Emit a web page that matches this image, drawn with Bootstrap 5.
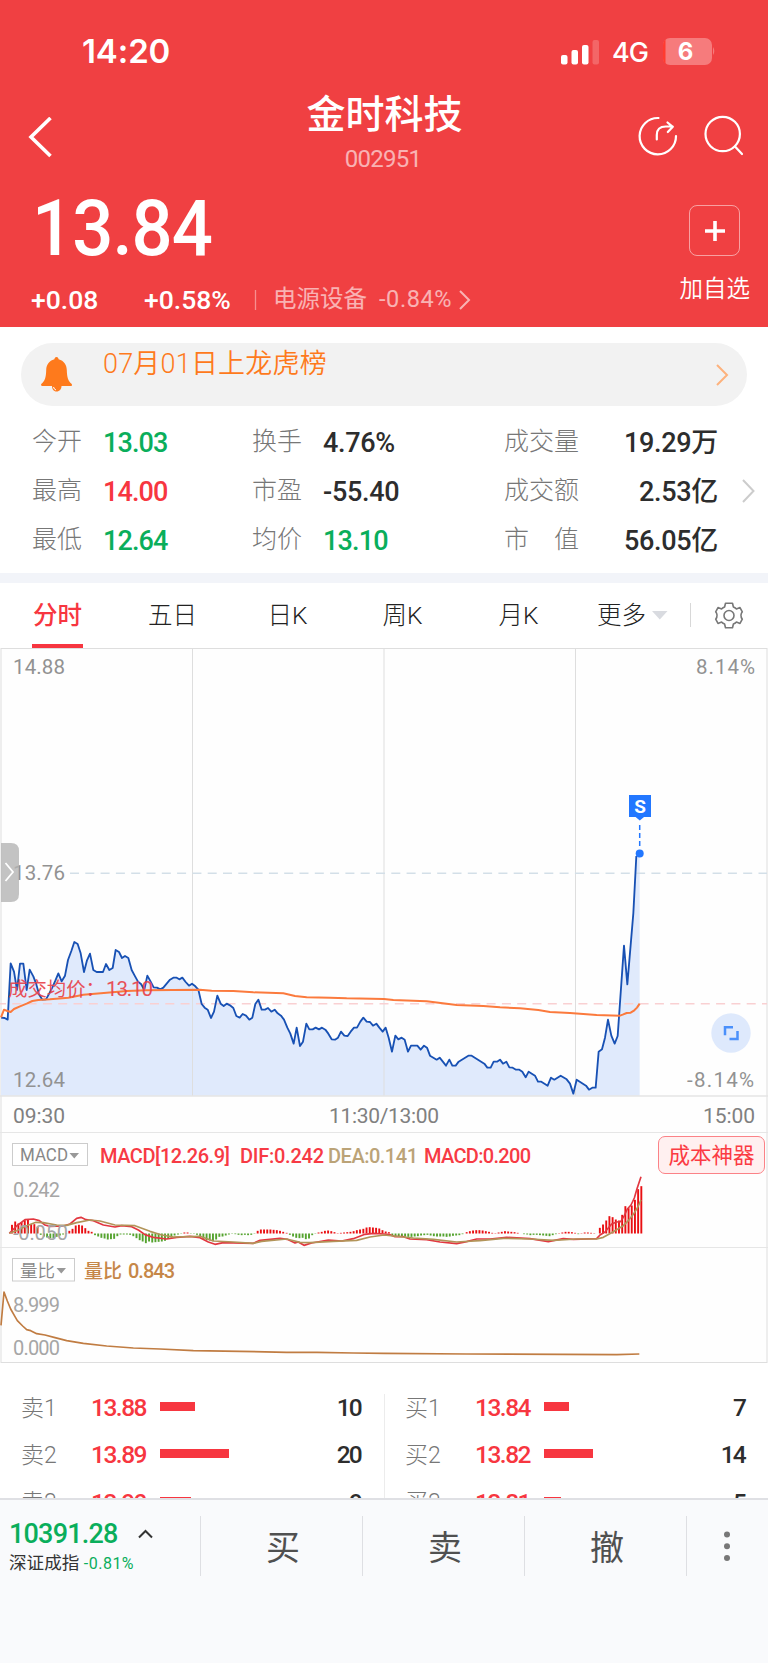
<!DOCTYPE html>
<html lang="zh-CN">
<head>
<meta charset="utf-8">
<meta name="viewport" content="width=device-width, initial-scale=1">
<title>金时科技 002951</title>
<link href="https://cdn.jsdelivr.net/npm/bootstrap@5.3.0/dist/css/bootstrap.min.css" rel="stylesheet">
<style>
:root{--up:#f73640;--down:#0aae5b;--ink:#2d2d2d;--mute:#777}
body{width:768px;height:1663px;overflow:hidden;background:#fff;color:var(--ink);font-family:Roboto,"Noto Sans CJK SC",sans-serif;line-height:1}
svg{display:block;flex:none}
.up{color:var(--up)}.down{color:var(--down)}
.hero{height:327px;background:#f04042;color:#fff}
.statusbar{height:80px;padding:31px 53px 0 82px;font-family:Inter,sans-serif}
.clock{font-size:33px;font-weight:600;letter-spacing:-.1px}
.signals{height:34px;margin-top:4px}
.net{font-size:27px;letter-spacing:-1px;font-weight:500;margin-left:12px;margin-right:15px}
.titlebar{height:110px;padding:0 25px 0 28px}
.stock-name{font-size:39px;font-weight:500;line-height:42px;margin-top:14px}
.stock-code{font-size:24px;letter-spacing:-.7px;opacity:.6;line-height:26px;margin:10px 5px 0 0}
.side{width:115px}
.price{font-size:77px;font-weight:500;letter-spacing:-1px;line-height:76px;margin:0 0 0 32px;padding-top:1px;transform:scaleX(.94);transform-origin:0 0}
.chg{font-size:26.5px;font-weight:500;letter-spacing:0;height:30px;margin-top:18px}
.chg .soft{opacity:.6;font-size:23.5px;font-weight:400}
.chg .soft + .soft{letter-spacing:.6px}
.addbox{width:51px;height:51px;border:1.3px solid rgba(255,255,255,.5);border-radius:8px}
.addtext{font-size:23.5px;padding-top:22px;font-weight:350}
.notice{height:63px;margin:16px 21px 0;background:#f2f2f2;border-radius:32px;color:#fe7a1c;font-size:27px;padding:0 18px 0 20px}
.notice-text{margin-left:31px;align-self:flex-start;padding-top:8px;letter-spacing:.2px;font-weight:350}
.stats{padding:12.5px 0 0 32px;height:167px}
.stat{height:49px}
.stat .k{color:var(--mute);font-size:25px;font-weight:300;width:71px;padding-bottom:3px}
.stat .v{font-size:27px;font-weight:500;letter-spacing:-.3px}
.c1 .v{letter-spacing:-.9px!important}
.c1{width:220px}.c2{width:252px}.c3{width:214px}.c3 .k{width:78px;white-space:nowrap}
.band{height:10px;background:#f2f4f9}
.tabs{height:65px;font-size:24.5px;font-weight:300;color:#222}
.tabs .t{height:65px;line-height:65px;text-align:center;white-space:nowrap}
.tabs .on{color:var(--up);font-weight:500;border-bottom:4px solid var(--up)}
text{font-family:Roboto,"Noto Sans CJK SC",sans-serif}
.pane{position:relative}
.cost{position:absolute;right:3px;top:488px;width:107px;height:38px;border:1.5px solid #fb8287;border-radius:7px;background:#fff0f0;color:#fb3b43;font-size:21.5px;padding-top:2px}
.book{height:136px;padding-top:20px;overflow:hidden}
.book .half{width:385px;padding-left:21px;padding-right:22px;margin-top:11px}
.book .half:first-child{border-right:1px solid #ececec;height:130px}
.book .half:last-child{width:383px;padding-left:20px}
.lvl{height:47.5px}
.lvl:first-child{height:30px;margin-bottom:8.5px;margin-top:-1px}
.lvl .k{width:70px;color:var(--mute);font-size:23px;font-weight:300}
.lvl .p{width:69px;color:var(--up);font-size:24.5px;font-weight:500;letter-spacing:-1.5px}
.lvl .q{font-size:24.5px;font-weight:500;letter-spacing:-1.8px;padding-right:1px}
.volbar{height:9px;background:var(--up);margin-bottom:3px}
.dock{height:165px;margin-top:-1px;background:#f9fafc;border-top:2px solid #dfe0e4;padding-top:16px;position:relative}
.dock .cell{height:60px;border-right:1px solid #dedfe3;width:162px;color:#505050;font-size:34px;padding:3px 0 0 4px}
.dock .idx{width:200.5px;padding:4px 0 0 9px}
.idxnum{font-size:27px;letter-spacing:-.8px;font-weight:500;height:28px}
.idxsub{font-size:17.6px;color:#333;margin-top:7px}
.idxsub .down{font-size:16px;letter-spacing:.5px}
</style>
</head>
<body>
<header class="hero">
  <div class="statusbar d-flex align-items-start">
    <div class="clock me-auto pt-1">14:20</div>
    <div class="signals d-flex align-items-center">
      <svg width="39" height="27" viewBox="0 0 39 27"><g fill="#fff"><rect x="0" y="16" width="6.5" height="9.5" rx="2"/><rect x="10.5" y="11" width="6.5" height="14.5" rx="2"/><rect x="21" y="6" width="6.5" height="19.5" rx="2"/><rect x="31.5" y="1" width="6.5" height="24.5" rx="2" opacity=".2"/></g></svg>
      <span class="net">4G</span>
      <svg width="52" height="28" viewBox="0 0 52 28"><rect x="0" y="0" width="49" height="27" rx="7" fill="#f67b7c"/><path d="M2.500 1C.8 3 0 5 0 7v13c0 3 1 5 2.500 6z" fill="#ff3b30"/><path d="M50 9q2.600 4 0 8z" fill="#f67b7c"/><text x="22.500" y="22" text-anchor="middle" font-size="24" font-weight="700" fill="#fff" style="font-family:Inter">6</text></svg>
    </div>
  </div>
  <div class="titlebar d-flex">
    <div class="side pt-3"><svg style="margin-top:21px" width="26" height="42" viewBox="0 0 26 42"><path d="M22.500 1 3 20 22.500 39" fill="none" stroke="#fff" stroke-width="3.600"/></svg></div>
    <div class="flex-grow-1 text-center"><div class="stock-name" style="margin-right:2px">金时科技</div><div class="stock-code">002951</div></div>
    <div class="side d-flex justify-content-end pt-3"><svg width="106" height="60" viewBox="637 96 106 60" fill="none" stroke="#fff" stroke-width="2.200" stroke-linecap="round" stroke-linejoin="round"><path d="M658.500 118a18.200 18.200 0 1 0 17.500 18"/><path d="M656.800 139.500v-4.500q0-8.500 9-8.500h7M667.500 122.500l5.300 4.300-5 5.200"/><circle cx="722.700" cy="134" r="17.200"/><path d="m735 146.500 7 7.500"/></svg></div>
  </div>
  <div class="d-flex justify-content-between">
    <div>
      <div class="price">13.84</div>
      <div class="chg d-flex align-items-center">
        <span style="margin-left:31px;width:113px">+0.08</span><span style="width:110px">+0.58%</span>
        <svg width="19" height="22"><path d="M1.500 1v20" stroke="#f78f90" stroke-width="1.300"/></svg>
        <span class="soft">电源设备</span><span class="soft ms-2 ps-1">-0.84%</span>
        <svg style="margin-left:6px" width="14" height="22" viewBox="0 0 14 22"><path d="m2 2 9 9-9 9" fill="none" stroke="#f9b3b3" stroke-width="2"/></svg>
      </div>
    </div>
    <div class="d-flex flex-column align-items-center" style="margin-right:18px;padding-top:15px">
      <div class="addbox d-flex align-items-center justify-content-center"><svg width="22" height="22"><path d="M11 1v20M1 11h20" stroke="#fff" stroke-width="3.600"/></svg></div>
      <div class="addtext">加自选</div>
    </div>
  </div>
</header>
<section class="notice d-flex align-items-center">
  <svg width="31" height="36" viewBox="0 0 31 36"><path d="M15.500 0c1.400 0 2 1 2.100 2.300 5.400 1.400 8 5.600 8.200 10.700.200 7.500 1.400 11 4.700 13.700.800.900.600 2.300-.600 2.300H1.100C0 29-.3 27.600.500 26.700 3.800 24 5 20.500 5.200 13c.200-5.100 2.800-9.300 8.200-10.700C13.500 1 14.100 0 15.500 0z" fill="#fe7a1c"/><path d="M11 29h9.500c0 3-2 5.500-5 5.500S11 32 11 29z" fill="#fe7a1c"/><path d="M12.500 30q.5 2.500 2.500 3" stroke="#fff" fill="none"/></svg>
  <span class="notice-text me-auto">07月01日上龙虎榜</span>
  <svg width="14" height="24" viewBox="0 0 14 24"><path d="m2 2 10 10-10 10" fill="none" stroke="#fdb27d" stroke-width="2"/></svg>
</section>
<section class="stats d-flex">
  <div class="c1">
    <div class="stat d-flex align-items-center"><span class="k">今开</span><span class="v down">13.03</span></div>
    <div class="stat d-flex align-items-center"><span class="k">最高</span><span class="v up">14.00</span></div>
    <div class="stat d-flex align-items-center"><span class="k">最低</span><span class="v down">12.64</span></div>
  </div>
  <div class="c2">
    <div class="stat d-flex align-items-center"><span class="k">换手</span><span class="v">4.76%</span></div>
    <div class="stat d-flex align-items-center"><span class="k">市盈</span><span class="v">-55.40</span></div>
    <div class="stat d-flex align-items-center"><span class="k">均价</span><span class="v down" style="letter-spacing:-.8px">13.10</span></div>
  </div>
  <div class="c3">
    <div class="stat d-flex align-items-center justify-content-between"><span class="k">成交量</span><span class="v">19.29万</span></div>
    <div class="stat d-flex align-items-center justify-content-between"><span class="k">成交额</span><span class="v">2.53亿</span></div>
    <div class="stat d-flex align-items-center justify-content-between"><span class="k">市　值</span><span class="v">56.05亿</span></div>
  </div>
  <svg style="margin:59px 0 0 23px" width="15" height="26" viewBox="0 0 15 26"><path d="m2 2 10.500 11L2 24" fill="none" stroke="#ccc" stroke-width="2"/></svg>
</section>
<div class="band"></div>
<nav class="tabs d-flex align-items-center">
  <div class="t on" style="width:51px;margin-left:32px">分时</div>
  <div class="t" style="width:51px;margin-left:64px">五日</div>
  <div class="t" style="width:51px;margin-left:64px">日K</div>
  <div class="t" style="width:51px;margin-left:64px">周K</div>
  <div class="t" style="width:51px;margin-left:65px">月K</div>
  <div class="t" style="width:51px;margin-left:52px">更多</div>
  <svg width="120" height="40" viewBox="647 596 120 40" fill="none"><path d="M652 611h15.500l-7.700 8.500z" fill="#d9dbe0"/><path d="M690.500 603v24" stroke="#d8d8d8"/><g stroke="#777" stroke-width="1.600" stroke-linejoin="round"><circle cx="729" cy="615.500" r="5"/><path d="M725.500 603.300h7l.9 3.700q1.600.6 3 1.900l3.600-1.300 2.300 4.200q-2.800 3.700 0 7.400l-2.300 4.200-3.600-1.300q-1.400 1.300-3 1.900l-.9 3.700h-7l-.9-3.700q-1.600-.6-3-1.900l-3.600 1.300-2.300-4.200q2.800-3.700 0-7.400l2.300-4.200 3.600 1.300q1.400-1.300 3-1.900z"/></g></svg>
</nav>
<section class="pane">
<svg width="768" height="715" viewBox="0 648 768 715">
  <rect x="1" y="648.500" width="766" height="714" fill="#fefefe" stroke="#dedede"/>
  <!-- price area and line, 3 units per pixel -->
  <g transform="translate(0 780) scale(.33333)">
    <polygon id="area" fill="#e0eafc"/>
  </g>
  <g stroke="#dedede" fill="none"><path d="M192.500 649v447M384 649v447M575.500 649v447"/><path d="M0 1132.500h768M0 1247.500h768" stroke="#e6e6e6"/></g>
  <path d="M0 1096h768" stroke="#e4e4e4" stroke-width="1.500"/>
  <path d="M70 873.200H767" stroke="#d3dfe8" stroke-width="1.600" stroke-dasharray="9 6.300"/>
  <path d="M0 1003.700H767" stroke="#f9d0d2" stroke-width="1.600" stroke-dasharray="9 6.300" stroke-dashoffset="3"/>
  <g transform="translate(0 780) scale(.33333)" fill="none" stroke-linejoin="round">
    <polyline id="price" stroke="#1851b4" stroke-width="5.500"/>
    <polyline stroke="#fb7a3d" stroke-width="6" points="3,712 12,689 22,693 32,696 42,687 60,679 80,671 97,663 115,660 150,658 205,653 250,644 320,638 380,633 440,631 600,629 635,632 700,633 760,637 850,640 885,648 920,652 990,653 1040,655 1152,657 1180,660 1280,664 1370,675 1450,678 1500,682 1560,685 1615,690 1650,696 1710,699 1790,705 1860,707 1868,704 1880,699 1892,698 1903,691 1911,683 1919,671"/>
  </g>
  <path d="M639.700 825v22" stroke="#2277ff" stroke-width="1.500" stroke-dasharray="5 3"/>
  <circle cx="639.700" cy="853.500" r="4" fill="#2277ff"/>
  <path d="M629 795h22v22h-7l-4.200 3.500-4.200-3.500H629z" fill="#2277ff"/>
  <text x="640" y="813" text-anchor="middle" font-size="19" font-weight="700" fill="#fff">S</text>
  <g font-size="20.500" fill="#929292">
    <text x="13" y="674" textLength="52">14.88</text><text x="13" y="880" textLength="52">13.76</text><text x="13" y="1087" textLength="52">12.64</text>
    <text x="696" y="674" textLength="59">8.14%</text><text x="687" y="1087" textLength="67">-8.14%</text>
  </g>
  <g font-size="21" fill="#808080"><text x="13" y="1123" textLength="52">09:30</text><text x="329" y="1123" textLength="110">11:30/13:00</text><text x="703" y="1123" textLength="52">15:00</text></g>
  <g fill="#e84048" opacity=".9"><text x="8" y="996" font-size="19.400">成交均价：</text><text x="106" y="996" font-size="20.500" textLength="47">13.10</text></g>
  <path d="M1 843h10q8 0 8 8v43q0 8-8 8H1z" fill="#b4b4b4" opacity=".8"/><path d="m5.500 863 7.500 9-7.500 9" fill="none" stroke="#fff" stroke-width="1.800"/>
  <circle cx="731" cy="1033" r="19.700" fill="#dee9fc"/><path d="M733 1027.300h-8v8M729.500 1039h8v-8" fill="none" stroke="#4a90fb" stroke-width="2.500"/>
  <!-- MACD pane -->
  <g id="bars"></g>
  <g transform="translate(0 1130) scale(.33333)" fill="none" stroke-width="5" stroke-linejoin="round">
    <polyline stroke="#e23740" points="28,310 50,288 75,269 100,267 118,272 135,285 150,289 190,288 210,282 230,265 243,262 258,269 280,272 310,285 345,291 365,287 395,290 415,300 435,314 460,322 500,327 530,322 570,319 600,323 625,336 645,343 670,338 760,340 780,331 840,325 862,328 885,339 895,336 912,346 935,339 985,330 1025,333 1060,326 1095,313 1120,310 1152,312 1170,314 1185,320 1210,320 1230,327 1280,329 1320,336 1370,341 1400,335 1430,327 1470,327 1520,322 1590,326 1645,335 1690,326 1720,328 1790,326 1800,315 1815,306 1825,294 1835,282 1850,276 1862,275 1873,257 1882,237 1893,225 1903,204 1911,176 1923,140"/>
    <polyline stroke="#b29459" points="28,310 50,302 80,287 108,277 130,278 170,285 200,286 230,278 270,270 300,273 345,285 405,287 450,304 485,315 520,321 600,319 640,333 700,336 760,340 785,334 860,327 900,337 930,338 1000,334 1070,331 1110,321 1152,315 1180,318 1240,324 1300,328 1370,336 1440,332 1510,325 1590,327 1660,331 1730,327 1790,327 1810,322 1832,310 1850,299 1870,287 1885,272 1900,253 1912,234 1923,210"/>
    <polyline stroke="#c07c42" points="3,586 12,486 22,513 32,537 45,560 52,572 68,588 80,599 92,602 110,611 135,615 165,623 200,632 250,640 320,648 400,654 480,657 580,662 720,664 860,667 950,667 1060,669 1152,670 1400,672 1850,674 1918,672"/>
  </g>
  <g font-size="20" fill="#a6a6a6"><text x="13" y="1197" textLength="47">0.242</text><text x="13" y="1240" textLength="55">-0.050</text><text x="13" y="1312" textLength="47">8.999</text><text x="13" y="1355" textLength="47">0.000</text></g>
  <g fill="#fff" stroke="#ccc"><rect x="12.500" y="1143.500" width="75" height="22"/><rect x="12.500" y="1258.500" width="62" height="22.500"/></g>
  <g fill="#888"><text x="20" y="1161" font-size="18.500" textLength="48" lengthAdjust="spacingAndGlyphs">MACD</text><text x="20" y="1277" font-size="17.500" font-weight="350">量比</text><path d="M69.500 1153h9.500l-4.700 5.500zM56.500 1268h9.500l-4.700 5.500z" fill="#999"/></g>
  <g font-size="20" font-weight="500" fill="#f73a44"><text x="100" y="1163" textLength="130">MACD[12.26.9]</text><text x="240" y="1163" textLength="84">DIF:0.242</text><text x="328" y="1163" textLength="90" fill="#bba377">DEA:0.141</text><text x="424" y="1163" textLength="107">MACD:0.200</text></g>
  <g fill="#c68748" font-weight="500"><text x="84" y="1278" font-size="19">量比</text><text x="128" y="1278" font-size="20" textLength="47">0.843</text></g>
</svg>
<div class="cost d-flex align-items-center justify-content-center">成本神器</div>
</section>
<section class="book d-flex" id="book"></section>
<footer class="dock d-flex">
  <div class="cell idx"><div class="idxnum down d-flex align-items-center">10391.28<svg style="margin-left:20px" width="15" height="10" viewBox="0 0 15 10"><path d="m1 8.500 6.500-6.500L14 8.500" fill="none" stroke="#333" stroke-width="2"/></svg></div><div class="idxsub">深证成指 <span class="down">-0.81%</span></div></div>
  <div class="cell d-flex align-items-center justify-content-center">买</div>
  <div class="cell d-flex align-items-center justify-content-center">卖</div>
  <div class="cell d-flex align-items-center justify-content-center">撤</div>
  <svg width="80" height="60" fill="#777"><circle cx="40" cy="18.500" r="3"/><circle cx="40" cy="30.300" r="3"/><circle cx="40" cy="42" r="3"/></svg>
</footer>
<script src="https://cdn.jsdelivr.net/npm/bootstrap@5.3.0/dist/js/bootstrap.bundle.min.js"></script>
<script>
const line="3,713 14,714 23,719 32,550 42,575 51,630 60,551 70,551 80,630 89,569 100,589 108,610 117,643 127,659 138,658 148,640 157,622 166,602 175,580 185,604 195,587 204,540 214,513 223,486 233,492 242,520 252,576 261,541 270,521 280,570 290,576 309,576 318,552 328,570 338,564 347,510 357,516 366,534 375,528 385,534 395,570 404,587 414,605 423,612 433,629 442,587 452,605 461,622 471,623 481,628 490,623 500,611 510,599 520,593 530,593 538,598 547,593 557,606 567,617 576,611 586,619 595,629 605,672 614,683 623,689 633,714 642,695 652,647 662,671 671,678 680,671 690,676 700,684 709,708 719,713 728,702 738,707 748,719 757,713 766,672 775,659 785,689 795,689 804,684 814,695 824,689 833,700 843,707 852,719 862,743 871,761 881,791 890,743 900,798 909,785 919,731 928,748 938,748 947,743 957,748 966,743 976,749 985,761 995,778 1005,779 1014,773 1023,755 1033,767 1043,768 1052,755 1062,743 1071,743 1081,725 1090,713 1100,725 1110,726 1119,737 1129,731 1138,743 1148,755 1157,743 1166,773 1176,815 1186,767 1195,778 1205,773 1214,779 1224,815 1233,797 1252,797 1262,809 1272,797 1281,803 1290,827 1310,839 1319,833 1338,857 1348,839 1357,857 1367,857 1376,845 1405,827 1415,827 1453,851 1462,863 1472,863 1481,845 1491,845 1500,839 1509,851 1519,845 1528,862 1538,863 1548,869 1558,869 1567,875 1577,892 1586,875 1605,887 1614,905 1624,905 1643,917 1653,893 1663,899 1682,887 1700,898 1710,911 1720,941 1730,899 1758,917 1767,929 1777,923 1787,923 1796,815 1806,808 1815,773 1824,719 1834,767 1844,791 1853,768 1872,497 1882,613 1900,400 1909,228 1919,212";
document.getElementById('price').setAttribute('points',line.replace(' 1919,212',''));
document.getElementById('area').setAttribute('points','3,947 '+line+' 1919,947');
/* MACD histogram: runs of minute bars, [start, values], 3 units per pixel */
const macd=[
[36,[26,36,30,34,40,42,28,28,20,-4,-9,-12,-14,-14,-10,-6,-3,-1]],
[208,[8,14,24,26,24,16,8,5]],
[285,[-5,-9,-13,-15,-18,-17,-16,-8,-3,-3,-3,-4,-8,-14,-20]],
[428,[-24,-29,-24,-27,-26,-25,-24,-22,-16,-12,-6]],
[534,[-3,-1,3,3,-1,-1]],
[591,[-4,-10,-16,-20,-21,-23,-18,-10,-9,-6,-3,-1,-2,-4,-5,-4,-5,-4,-1]],
[773,[8,12,12,12,12,11,10,8,5]],
[860,[2,-4,-9,-13,-14,-13,-17,-15,-5]],
[946,[-1,3,5,8,9,7,4,1,2,3,4,5,7,10,12]],
[1090,[14,18,19,18,17,15,10,6,4]],
[1177,[-6,-8,-9,-10,-9,-10,-10,-9,-8,-6,-5,-4,-6,-8,-9,-9,-9,-10,-9,-7,-6,-5,-2]],
[1400,[4,7,9,10,10,9,7,5,2,1,3,5,7,6,5,4,2]],
[1572,[-2,-3,-5,-4,-4,-5,-6,-7,-8,-5,-2,1]],
[1687,[3,5,5,4,2,-2,1,3,3,2,1]],
[1799.500,[17,27,39,52,49,42,39,56,82,76,84,101,133,142]]];
document.getElementById('bars').innerHTML=macd.map(([s,vs])=>vs.map((v,i)=>{const x=(s+i*9.575)/3,h=Math.abs(v)/3;return `<rect x="${(x-.95).toFixed(2)}" y="${(v>0?1233.5-h:1233.5).toFixed(2)}" width="1.900" height="${h.toFixed(2)}" fill="${v>0?'#e90f12':'#55a32f'}"/>`}).join('')).join('');
/* five-level order book */
const sides=[[['卖1','13.88',34.5,10],['卖2','13.89',69,20],['卖3','13.90',31,9]],[['买1','13.84',24.5,7],['买2','13.82',48.5,14],['买3','13.81',16.5,5]]];
document.getElementById('book').innerHTML=sides.map(s=>'<div class="half">'+s.map(r=>`<div class="lvl d-flex align-items-center"><span class="k">${r[0]}</span><span class="p">${r[1]}</span><span class="volbar" style="width:${r[2]}px"></span><span class="q ms-auto">${r[3]}</span></div>`).join('')+'</div>').join('');
</script>
</body>
</html>
